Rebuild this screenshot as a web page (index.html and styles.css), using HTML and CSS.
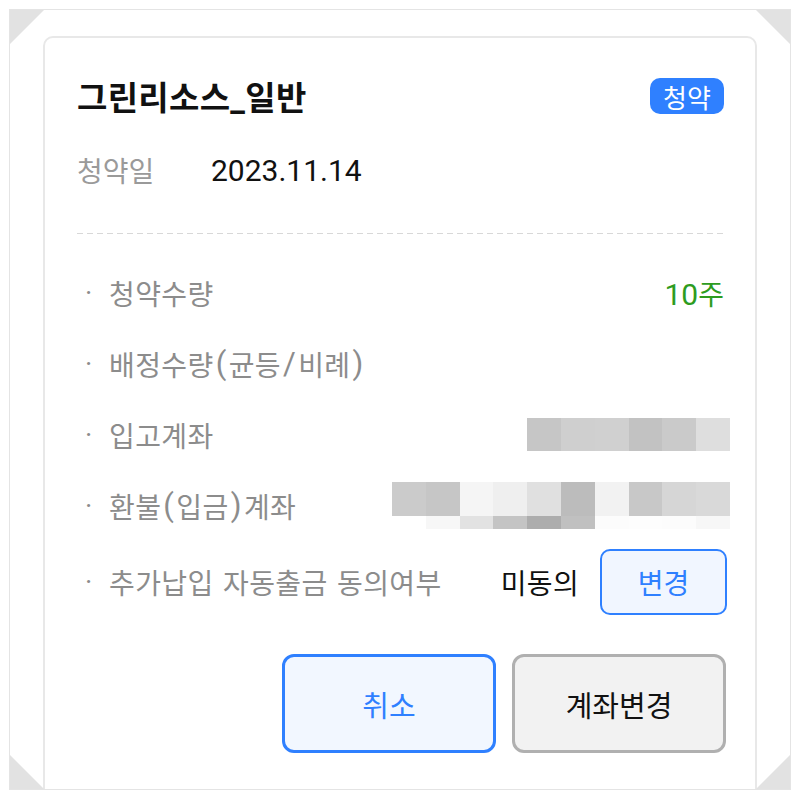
FILE: index.html
```html
<!DOCTYPE html>
<html lang="ko">
<head>
<meta charset="utf-8">
<link rel="stylesheet" href="styles.css">
</head>
<body>
<div class="frame">
  <span class="corner tl"></span>
  <span class="corner tr"></span>
  <span class="corner bl"></span>
  <span class="corner br"></span>
  <div class="card">
    <div class="head">
      <h1 class="title">그린리소스_일반</h1>
      <span class="badge">청약</span>
    </div>
    <div class="date-row">
      <span class="date-label">청약일</span>
      <span class="date-value">2023.11.14</span>
    </div>
    <div class="divider"></div>
    <ul class="list">
      <li class="row">
        <span class="label">청약수량</span>
        <span class="qty"><span class="num">10</span>주</span>
      </li>
      <li class="row">
        <span class="label">배정수량<span class="punct">(</span>균등<span class="punct">/</span>비례<span class="punct">)</span></span>
      </li>
      <li class="row">
        <span class="label">입고계좌</span>
        <div class="mosaic m1">
          <i style="background:#c6c6c6"></i><i style="background:#cfcfcf"></i><i style="background:#d0d0d0"></i><i style="background:#c2c2c2"></i><i style="background:#cacaca"></i><i style="background:#dedede"></i>
        </div>
      </li>
      <li class="row">
        <span class="label">환불<span class="punct">(</span>입금<span class="punct">)</span>계좌</span>
        <div class="mosaic m2">
          <i style="background:#cbcbcb"></i><i style="background:#c6c6c6"></i><i style="background:#f5f5f5"></i><i style="background:#efefef"></i><i style="background:#e0e0e0"></i><i style="background:#bcbcbc"></i><i style="background:#f2f2f2"></i><i style="background:#c8c8c8"></i><i style="background:#d6d6d6"></i><i style="background:#d9d9d9"></i>
          <b style="background:#ffffff"></b><b style="background:#f7f7f7"></b><b style="background:#e2e2e2"></b><b style="background:#c4c4c4"></b><b style="background:#adadad"></b><b style="background:#c0c0c0"></b><b style="background:#fcfcfc"></b><b style="background:#fdfdfd"></b><b style="background:#fcfcfc"></b><b style="background:#f7f7f7"></b>
        </div>
      </li>
      <li class="row row-last">
        <span class="label">추가납입 자동출금 동의여부</span>
        <div class="consent">
          <span class="consent-value">미동의</span>
          <button class="btn-small">변경</button>
        </div>
      </li>
    </ul>
    <div class="actions">
      <button class="btn btn-cancel">취소</button>
      <button class="btn btn-change">계좌변경</button>
    </div>
  </div>
</div>
</body>
</html>
```

FILE: styles.css
```css
* { box-sizing: border-box; }
html, body { margin: 0; padding: 0; background: #fff; }
body {
  font-family: Roboto, "Noto Sans CJK KR", sans-serif;
  width: 800px;
  height: 800px;
  overflow: hidden;
}
.frame {
  position: relative;
  margin: 9px 9px 0 9px;
  height: 781px;
  border: 1px solid #e4e4e4;
  padding: 26px 33px 0 33px;
  overflow: hidden;
}
.corner {
  position: absolute;
  width: 34px;
  height: 34px;
  background: #e2e2e2;
}
.corner.tl { top: 0; left: 0; clip-path: polygon(0 0, 100% 0, 0 100%); }
.corner.tr { top: 0; right: 0; clip-path: polygon(0 0, 100% 0, 100% 100%); }
.corner.bl { bottom: 0; left: 0; clip-path: polygon(0 0, 100% 100%, 0 100%); }
.corner.br { bottom: 0; right: 0; clip-path: polygon(100% 0, 100% 100%, 0 100%); }
.card {
  border: 2px solid #e8e8e8;
  border-radius: 10px;
  height: 800px;
  padding: 40px 31px 0 32px;
}
.head {
  display: flex;
  justify-content: space-between;
  align-items: center;
  height: 36px;
}
.title {
  margin: 0;
  font-size: 33px;
  font-weight: 700;
  color: #111;
  letter-spacing: 0.3px;
}
.badge {
  width: 74px;
  height: 36px;
  border-radius: 10px;
  background: #2f80ff;
  color: #fff;
  font-size: 26px;
  display: flex;
  align-items: center;
  justify-content: center;
}
.date-row {
  margin-top: 41px;
  height: 30px;
  display: flex;
  align-items: center;
}
.date-label {
  width: 134px;
  font-size: 28px;
  color: #9a9a9a;
}
.date-value {
  font-size: 30px;
  color: #111;
}
.divider {
  margin-top: 48px;
  height: 1px;
  background: repeating-linear-gradient(90deg, #d8d8d8 0 6px, transparent 6px 10px);
}
.list {
  list-style: none;
  margin: 23px 0 0 0;
  padding: 0;
}
.row {
  height: 71px;
  display: flex;
  align-items: center;
  justify-content: space-between;
}
.row-last {
  height: 76px;
  padding-top: 5px;
}
.label {
  font-size: 28px;
  color: #8c8c8c;
  display: flex;
  align-items: center;
  letter-spacing: 0.4px;
  word-spacing: 2px;
}
.label::before {
  content: "·";
  box-sizing: border-box;
  width: 32px;
  padding-left: 8px;
  color: #8c8c8c;
}
.punct {
  font-size: 31px;
  padding: 0 2px;
}
.qty {
  font-size: 28px;
  color: #2e9c1e;
}
.num { font-size: 30px; }
.mosaic {
  display: grid;
  grid-auto-rows: 33px;
}
.mosaic i, .mosaic b { display: block; }
.m1 { grid-template-columns: repeat(6, 33.8px); margin-right: -6px; }
.m2 { grid-template-columns: repeat(10, 33.8px); grid-template-rows: 34px 13px; margin-right: -6px; }
.consent {
  display: flex;
  align-items: center;
  gap: 21px;
}
.consent-value {
  font-size: 28px;
  color: #111;
  letter-spacing: 0.3px;
}
.btn-small {
  width: 127px;
  height: 66px;
  border: 2px solid #2f80ff;
  border-radius: 10px;
  background: #f1f6ff;
  color: #2f80ff;
  font-family: inherit;
  font-size: 28px;
  margin-right: -3px;
}
.actions {
  margin-top: 37px;
  margin-right: -2px;
  display: flex;
  justify-content: flex-end;
  gap: 16px;
}
.btn {
  width: 214px;
  height: 99px;
  border-radius: 12px;
  font-family: inherit;
  font-size: 29px;
}
.btn-cancel {
  border: 3px solid #2f80ff;
  background: #f2f7ff;
  color: #2f80ff;
}
.btn-change {
  border: 3px solid #b0b0b0;
  background: #f2f2f2;
  color: #111;
}
```
